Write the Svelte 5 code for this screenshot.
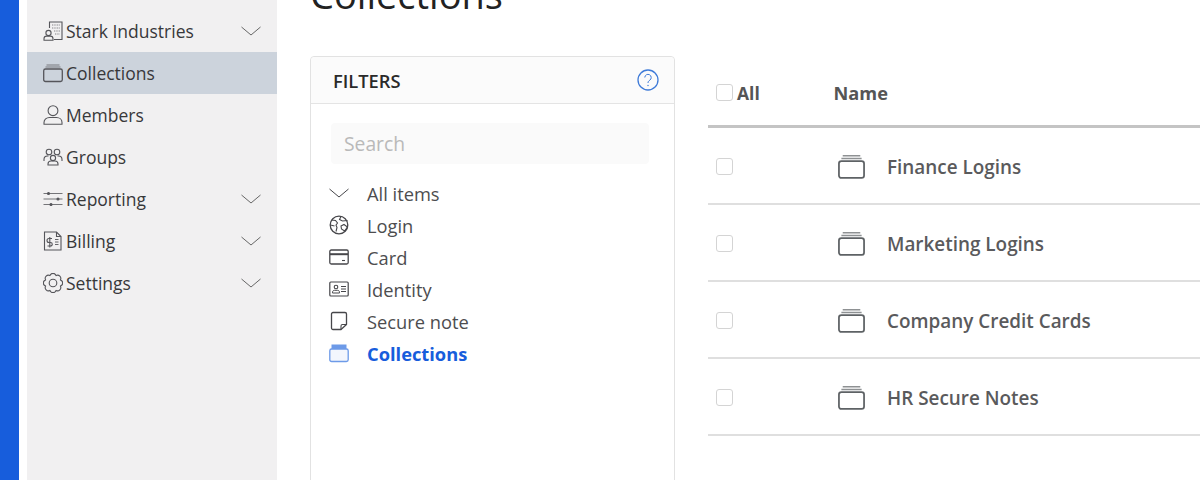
<script lang="ts">
    const nav = [
        { label: 'Stark Industries', icon: 'org', caret: true },
        { label: 'Collections', icon: 'stack', active: true },
        { label: 'Members', icon: 'user' },
        { label: 'Groups', icon: 'group' },
        { label: 'Reporting', icon: 'sliders', caret: true },
        { label: 'Billing', icon: 'bill', caret: true },
        { label: 'Settings', icon: 'gear', caret: true },
    ];

    const filters = [
        { label: 'All items', icon: 'chevron' },
        { label: 'Login', icon: 'globe' },
        { label: 'Card', icon: 'card' },
        { label: 'Identity', icon: 'id' },
        { label: 'Secure note', icon: 'note' },
        { label: 'Collections', icon: 'stackBlue', active: true },
    ];

    const rows = ['Finance Logins', 'Marketing Logins', 'Company Credit Cards', 'HR Secure Notes'];
</script>

{#snippet icon(name: string)}
    <svg class="icon" viewBox="0 0 20 20" fill="none" stroke="currentColor" stroke-width="1.1">
        {#if name === 'org'}
            <path d="M6.5 7V1h12.5v17.5H11" />
            <path d="M9 4h8M9 7h8M11 10h6M12 13h5" stroke-width="0.7" stroke-dasharray="1 0.7" />
            <circle cx="5.5" cy="12" r="2.6" />
            <path d="M1 19.3v-1.6c0-1.6 1.3-2.6 2.6-2.6h3.8c1.4 0 2.6 1 2.6 2.6v1.6z" />
        {:else if name === 'stack'}
            <rect x="0.7" y="6" width="18.6" height="12.5" rx="1.8" stroke-width="1.3" />
            <path d="M2.5 4h15M3.5 2h13" stroke-opacity="0.7" />
        {:else if name === 'user'}
            <circle cx="10" cy="5.700" r="4.900" />
            <path d="M1 19.300v-1.800C1 14.500 3.500 12.500 6.500 12.500h7c3 0 5.500 2 5.500 5v1.800z" />
        {:else if name === 'group'}
            <circle cx="6" cy="5" r="2.800" />
            <circle cx="14" cy="5" r="2.800" />
            <circle cx="10" cy="11" r="2.600" />
            <path d="M1 14v-1.500C1 10.500 2.500 9 4.500 9h1M19 14v-1.500c0-2-1.500-3.500-3.500-3.500h-1M5 18v-1c0-1.800 1.300-3 3-3h4c1.700 0 3 1.200 3 3v1z" />
        {:else if name === 'sliders'}
            <path d="M0.500 4.500h19M0.500 10h19M0.500 15.500h19" stroke-width="0.8" />
            <circle cx="5.500" cy="4.500" r="1" fill="currentColor" />
            <circle cx="15" cy="10" r="1" fill="currentColor" />
            <circle cx="8" cy="15.500" r="1" fill="currentColor" />
        {:else if name === 'bill'}
            <path d="M1.500 1h12l4.500 4.500V19H1.500z" />
            <path d="M13.500 1v4.500H18" />
            <path d="M9 7.500H6a1.500 1.500 0 0 0 0 4h1.500a1.600 1.600 0 0 1 0 3.500H4.500M6.800 6v10.500" />
            <path d="M12 8.500h3.500M12 11h3.500M12 13.500h3.500" stroke-width="0.9" />
        {:else if name === 'gear'}
            <path d="M17.390 13.060A3.200 3.200 0 0 1 13.060 17.390A3.200 3.200 0 0 1 6.940 17.390A3.200 3.200 0 0 1 2.610 13.060A3.200 3.200 0 0 1 2.610 6.940A3.200 3.200 0 0 1 6.940 2.610A3.200 3.200 0 0 1 13.060 2.610A3.200 3.200 0 0 1 17.390 6.940A3.200 3.200 0 0 1 17.390 13.060z" stroke-linejoin="round" />
            <circle cx="10" cy="10" r="3.800" />
        {:else if name === 'globe'}
            <circle cx="10" cy="10" r="8.800" stroke-width="1.300" />
            <path d="M2.500 5l4 .5 2 2.500-1.500 2 1 2.500-1 4M12 1.500l-1.500 3 3 1.500 5-.5M1.500 10l4 1M12 11l3-1.500 3.500 2.500-3 4-3-2z" />
        {:else if name === 'card'}
            <rect x="0.800" y="3" width="18.400" height="14" rx="1.500" stroke-width="1.300" />
            <path d="M1 7.200h18" stroke-width="2" />
            <path d="M13 13.500h3" />
        {:else if name === 'id'}
            <rect x="0.800" y="3" width="18.400" height="14" rx="1" stroke-width="1.200" />
            <circle cx="7" cy="8" r="1.800" />
            <path d="M3.500 14v-.8c0-1.200 1-1.900 2-1.900h3c1 0 2 .7 2 1.900v.8zM12 7.500h5M12 10h5M12 12.500h5" stroke-width="1" />
        {:else if name === 'note'}
            <path d="M4 1.500h12a1.500 1.500 0 0 1 1.500 1.500v10.500l-5.500 5H4A1.500 1.500 0 0 1 2.500 17V3A1.500 1.500 0 0 1 4 1.500z" stroke-width="1.300" stroke-linejoin="round" />
            <path d="M17.500 13.500h-4a1.500 1.500 0 0 0-1.500 1.500v3.500" />
        {:else if name === 'stackBlue'}
            <rect x="0.800" y="6" width="18.400" height="12.500" rx="1.800" stroke-width="1.300" fill="#f3f6fd" />
            <rect x="2.500" y="1.500" width="15" height="4.500" fill="currentColor" stroke="none" />
        {:else if name === 'chevron'}
            <path d="M0.500 6l9.500 8 9.500-8" stroke-width="1" />
        {/if}
    </svg>
{/snippet}

<div class="page">
    <div class="rail"></div>

    <aside class="sidebar">
        {#each nav as item}
            <div class="nav-item" class:active={item.active}>
                {@render icon(item.icon)}
                <span class="nav-label">{item.label}</span>
                {#if item.caret}
                    <svg class="caret" viewBox="0 0 20 10" fill="none" stroke="currentColor" stroke-width="1">
                        <path d="M0.500 1l9.500 8 9.500-8" />
                    </svg>
                {/if}
            </div>
        {/each}
    </aside>

    <main class="content">
        <h1>Collections</h1>
        <div class="columns">
            <section class="filters">
                <header class="filters-head">
                    <span>FILTERS</span>
                    <svg class="help" viewBox="0 0 22 22" fill="none" stroke="currentColor">
                        <circle cx="11" cy="11" r="10" stroke-width="1.300" />
                        <path d="M7.800 8.500a3.200 3.200 0 1 1 5 2.700c-1.100.8-1.800 1.300-1.800 2.800" stroke-width="1" />
                        <circle cx="11" cy="16.500" r="0.700" fill="currentColor" stroke="none" />
                    </svg>
                </header>
                <div class="filters-body">
                    <div class="search">Search</div>
                    <ul class="filter-list">
                        {#each filters as f}
                            <li class:active={f.active}>
                                {@render icon(f.icon)}
                                <span>{f.label}</span>
                            </li>
                        {/each}
                    </ul>
                </div>
            </section>

            <section class="table">
                <div class="row head">
                    <div class="check-cell"><span class="check"></span><b>All</b></div>
                    <div class="name-head">Name</div>
                </div>
                {#each rows as r}
                    <div class="row">
                        <div class="check-cell"><span class="check"></span></div>
                        <div class="row-icon">{@render icon('stack')}</div>
                        <div class="row-name">{r}</div>
                    </div>
                {/each}
            </section>
        </div>
    </main>
</div>

<style>
    :global(body) {
        background: #fff;
        overflow: hidden;
    }

    .page {
        display: flex;
        height: 480px;
        overflow: hidden;
        font-family: "Open Sans", sans-serif;
        color: #333;
    }

    .rail {
        width: 19px;
        background: #175ddc;
        flex: none;
    }

    .sidebar {
        width: 250px;
        margin-left: 8px;
        padding-top: 10px;
        background: #f1f0f1;
        flex: none;
        box-sizing: border-box;
    }

    .nav-item {
        height: 42px;
        display: flex;
        align-items: center;
        padding: 0 16px;
        font-size: 17.500px;
        color: #38383a;
    }

    .nav-label {
        flex: 1;
    }

    .nav-item.active {
        background: #ccd3dc;
    }

    .nav-item .icon {
        width: 20px;
        height: 20px;
        margin-right: 3px;
        color: #55555a;
    }

    .caret {
        width: 20px;
        height: 10px;
        margin-right: 0;
        color: #666;
    }

    .content {
        flex: 1;
        min-width: 0;
        padding-left: 33px;
    }

    h1 {
        margin: -30px 0 0;
        height: 86px;
        font-size: 38px;
        line-height: 48px;
        font-weight: 400;
        color: #222;
    }

    .columns {
        display: flex;
        gap: 33px;
    }

    .filters {
        width: 365px;
        height: 440px;
        flex: none;
        box-sizing: border-box;
        border: 1px solid #e2e2e2;
        border-radius: 4px;
    }

    .filters-head {
        height: 47px;
        box-sizing: border-box;
        display: flex;
        align-items: center;
        justify-content: space-between;
        padding: 0 15px 0 22px;
        background: #fbfbfb;
        border-bottom: 1px solid #e4e4e4;
        font-size: 18.300px;
        font-weight: 600;
        color: #2a2a2a;
        border-radius: 4px 4px 0 0;
    }

    .help {
        width: 22px;
        height: 22px;
        color: #3f7bd8;
    }

    .filters-body {
        padding: 19px 25px 0 20px;
    }

    .search {
        height: 41px;
        box-sizing: border-box;
        padding: 0 13px 1px;
        display: flex;
        align-items: center;
        background: #fafafa;
        border-radius: 4px;
        font-size: 19.300px;
        color: #b9b9b9;
    }

    .filter-list {
        list-style: none;
        margin: 13px 0 0 -2px;
        padding: 0;
    }

    .filter-list li {
        height: 32px;
        display: flex;
        align-items: center;
        gap: 18px;
        font-size: 18.300px;
        color: #4d4d4f;
    }

    .filter-list .icon {
        width: 20px;
        height: 20px;
        color: #46464a;
    }

    .filter-list li.active {
        color: #175ddc;
        font-weight: 700;
    }

    .filter-list li.active .icon {
        color: #6d9ae8;
    }

    .table {
        flex: 1;
        min-width: 0;
    }

    .row {
        display: flex;
        align-items: center;
        height: 77px;
        box-sizing: border-box;
        padding-top: 2px;
        border-bottom: 2px solid #dfdfdf;
        font-size: 18.900px;
        font-weight: 600;
        color: #5a5a5c;
    }

    .row.head {
        height: 72px;
        padding-top: 5px;
        border-bottom: 3px solid #c4c4c4;
    }

    .check-cell {
        width: 126px;
        padding-left: 8px;
        box-sizing: border-box;
        display: flex;
        align-items: center;
    }

    .row.head .check-cell {
        width: 125.500px;
    }

    .row.head .check {
        margin-bottom: 2px;
    }

    .check-cell b {
        font-size: 17.500px;
        font-weight: 700;
        color: #555;
        margin-left: 4px;
    }

    .check {
        width: 17px;
        height: 17px;
        box-sizing: border-box;
        border: 1.500px solid #d4d4d4;
        border-radius: 3px;
        background: #fff;
    }

    .name-head {
        font-size: 18.200px;
        font-weight: 700;
        color: #555;
    }

    .row-icon {
        width: 53px;
        display: flex;
        padding-left: 4px;
        box-sizing: border-box;
    }

    .row-icon .icon {
        width: 27px;
        height: 27px;
        color: #5e6265;
    }
</style>
